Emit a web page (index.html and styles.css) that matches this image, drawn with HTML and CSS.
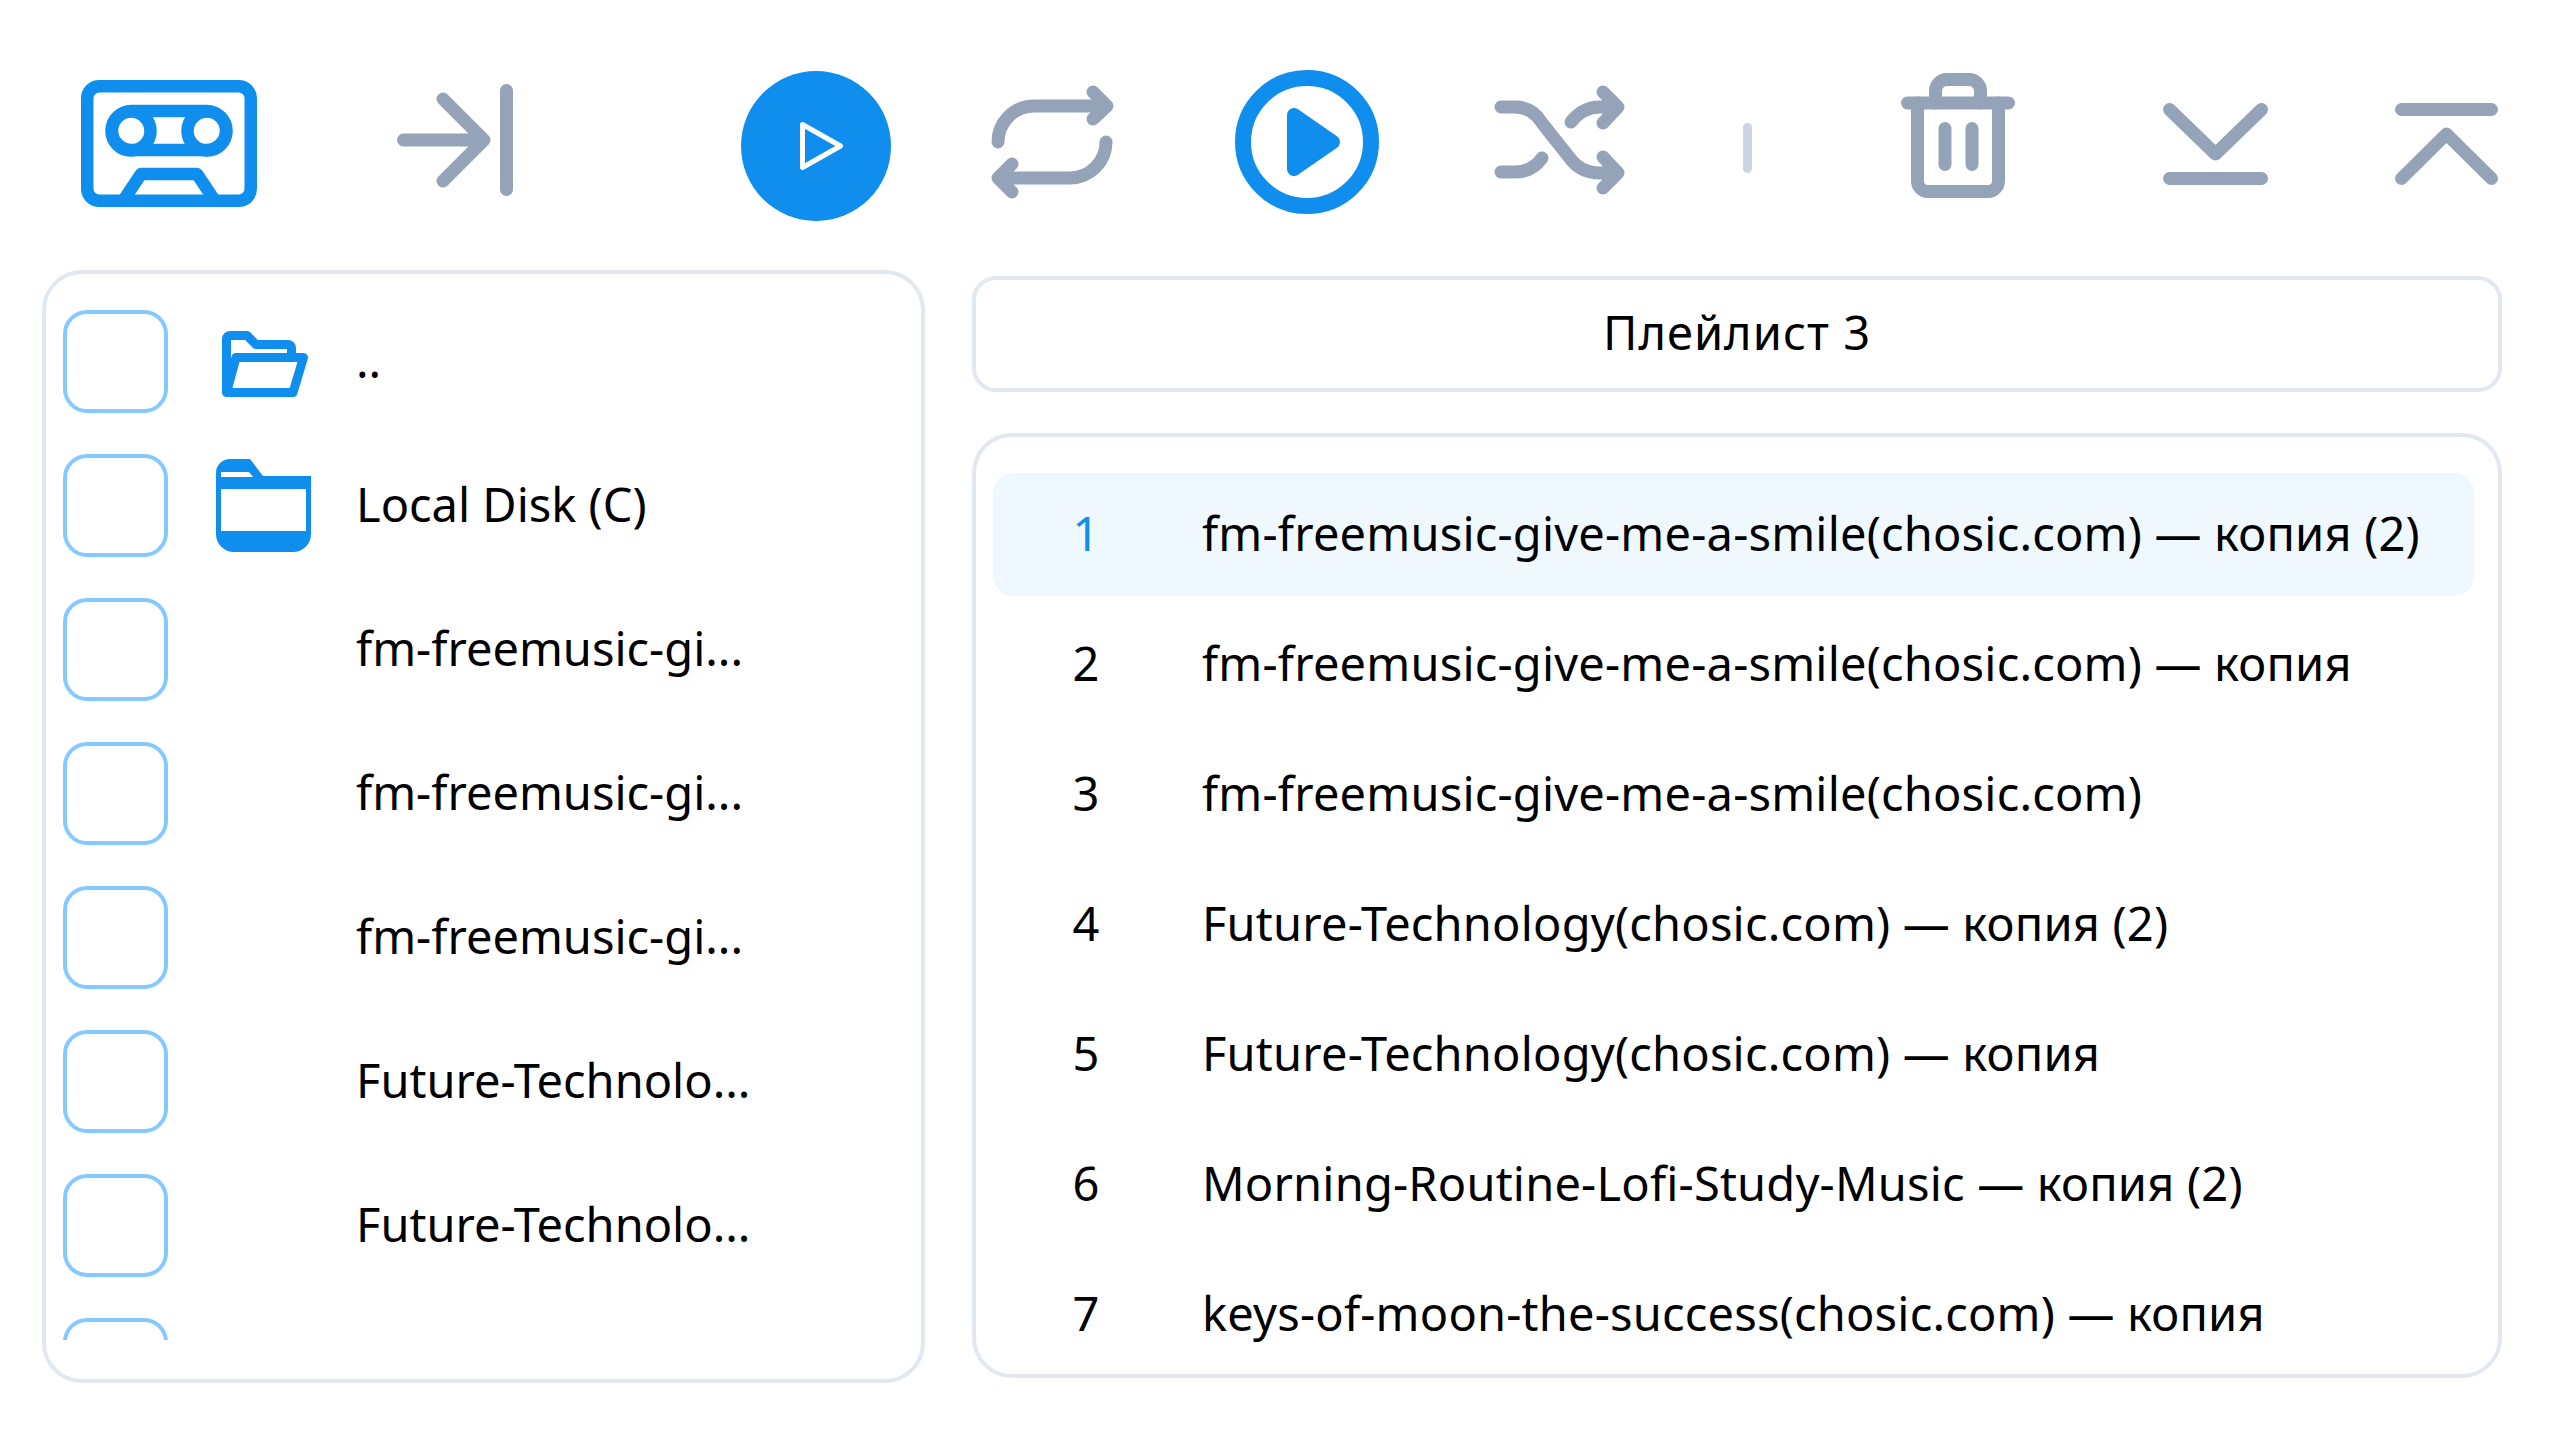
FILE: index.html
```html
<!DOCTYPE html>
<html lang="en">
<head>
    <meta charset="UTF-8">
    <meta name="viewport" content="width=device-width, initial-scale=1.0">
    <title>Player</title>
    <link rel="stylesheet" href="styles.css">
</head>
<body>

    <header class="toolbar">
        <svg class="icon icon-cassette" width="176" height="127" viewBox="0 0 176 127">
            <rect x="6.25" y="6.25" width="163.5" height="114.5" rx="12"/>
            <rect x="31" y="31" width="114" height="39" rx="19.5"/>
            <circle cx="50" cy="51" r="19.5"/>
            <circle cx="126" cy="51" r="19.5"/>
            <path d="M42 121 L60 94 H116 L134 121"/>
        </svg>
        <svg class="icon icon-skip" width="116" height="112" viewBox="0 0 116 112">
            <path d="M6.5 56 H85 M46 15 L87 56 L46 97 M109.5 6.5 V105.5"/>
        </svg>
        <svg class="icon-play" width="150" height="150" viewBox="0 0 150 150">
            <circle cx="75" cy="75" r="75"/>
            <path d="M61.5 53.5 L99.5 75 L61.5 96.5 Z"/>
        </svg>
        <svg class="icon icon-repeat" width="135" height="125" viewBox="0 0 135 125">
            <path d="M13 62 A36 36 0 0 1 49 26 H122 M108 12 L122 26 L108 39"/>
            <path d="M121 62 A36 36 0 0 1 85 98 H13 M27 84 L13 98 L27 112"/>
        </svg>
        <svg class="icon-autoplay" width="144" height="144" viewBox="0 0 144 144">
            <circle cx="72" cy="72" r="64"/>
            <path d="M59 45 L98 72 L59 99 Z"/>
        </svg>
        <svg class="icon icon-shuffle" width="140" height="118" viewBox="0 0 140 118">
            <path d="M11 27 H25 C38 27 46 33 52 43 L79 77 C86 87 96 93 110 93 H127 M113 77 L128 93 L113 108"/>
            <path d="M81 42 C88 33 98 27 110 27 H127 M113 12 L128 27 L113 43"/>
            <path d="M11 92 H25 C36 92 45 88 52 78"/>
        </svg>
        <div class="separator"></div>
        <svg class="icon icon-trash" width="114" height="125" viewBox="0 0 114 125">
            <path d="M6.5 30 H107.5"/>
            <path d="M16.5 30 V108 A10.5 10.5 0 0 0 27 118.5 H87 A10.5 10.5 0 0 0 97.5 108 V30"/>
            <path d="M34.5 30 V18 A11.5 11.5 0 0 1 46 6.5 H68 A11.5 11.5 0 0 1 79.5 18 V30"/>
            <path d="M44 55.5 V91.5 M71 55.5 V91.5"/>
        </svg>
        <svg class="icon icon-down" width="105" height="82" viewBox="0 0 105 82">
            <path d="M6.5 6.5 L52.5 51 L98.5 6.5 M6.5 75.5 H98.5"/>
        </svg>
        <svg class="icon icon-up" width="103" height="82" viewBox="0 0 103 82">
            <path d="M6.5 6.5 H96.5 M6.5 75.5 L51.5 31 L96.5 75.5"/>
        </svg>
    </header>

    <main class="content">
        <section class="files">
            <div class="file-list">
                <div class="file">
                    <div class="check"></div>
                    <div class="file-icon">
                        <svg class="folder-open" width="86" height="66" viewBox="0 0 86 66">
                            <path d="M4.5 61.5 V8 A3.5 3.5 0 0 1 8 4.5 H25 L34 13.5 H66 A3.5 3.5 0 0 1 69.5 17 V25"/>
                            <path d="M4.5 61.5 L14 26.5 H81.5 L71 61.5 Z"/>
                        </svg>
                    </div>
                    <span class="file-name">..</span>
                </div>
                <div class="file">
                    <div class="check"></div>
                    <div class="file-icon">
                        <svg class="folder" width="95" height="93" viewBox="0 0 95 93">
                            <path class="folder-fill" d="M0 14 A14 14 0 0 1 14 0 H34 L47 17 H95 V75 A18 18 0 0 1 77 93 H18 A18 18 0 0 1 0 75 Z"/>
                            <path class="folder-cut" d="M5 30 H90 V72 H5 Z M5 13 H33 L37 18 H5 Z"/>
                        </svg>
                    </div>
                    <span class="file-name">Local Disk (C)</span>
                </div>
                <div class="file">
                    <div class="check"></div>
                    <div class="file-icon"></div>
                    <span class="file-name">fm-freemusic-gi...</span>
                </div>
                <div class="file">
                    <div class="check"></div>
                    <div class="file-icon"></div>
                    <span class="file-name">fm-freemusic-gi...</span>
                </div>
                <div class="file">
                    <div class="check"></div>
                    <div class="file-icon"></div>
                    <span class="file-name">fm-freemusic-gi...</span>
                </div>
                <div class="file">
                    <div class="check"></div>
                    <div class="file-icon"></div>
                    <span class="file-name">Future-Technolo...</span>
                </div>
                <div class="file">
                    <div class="check"></div>
                    <div class="file-icon"></div>
                    <span class="file-name">Future-Technolo...</span>
                </div>
                <div class="file">
                    <div class="check"></div>
                    <div class="file-icon"></div>
                    <span class="file-name"></span>
                </div>
            </div>
        </section>

        <section class="side">
            <div class="playlist-title"><span>Плейлист 3</span></div>
            <div class="tracks">
                <div class="track active"><span class="track-num">1</span><span class="track-name">fm-freemusic-give-me-a-smile(chosic.com) — копия (2)</span></div>
                <div class="track"><span class="track-num">2</span><span class="track-name">fm-freemusic-give-me-a-smile(chosic.com) — копия</span></div>
                <div class="track"><span class="track-num">3</span><span class="track-name">fm-freemusic-give-me-a-smile(chosic.com)</span></div>
                <div class="track"><span class="track-num">4</span><span class="track-name">Future-Technology(chosic.com) — копия (2)</span></div>
                <div class="track"><span class="track-num">5</span><span class="track-name">Future-Technology(chosic.com) — копия</span></div>
                <div class="track"><span class="track-num">6</span><span class="track-name">Morning-Routine-Lofi-Study-Music — копия (2)</span></div>
                <div class="track"><span class="track-num">7</span><span class="track-name">keys-of-moon-the-success(chosic.com) — копия</span></div>
            </div>
        </section>
    </main>

</body>
</html>
```

FILE: styles.css
```css
body {
    font-family: "Noto Sans", "Open Sans", sans-serif;
    font-size: 47px;
    letter-spacing: 0.2px;
    line-height: 60px;
    color: #000;
    margin: 0;
    background-color: #fff;
}

.toolbar {
    display: flex;
    align-items: flex-start;
    height: 270px;
    box-sizing: border-box;
}

.icon {
    fill: none;
    stroke: #94a3b8;
    stroke-width: 13;
    stroke-linecap: round;
    stroke-linejoin: round;
    flex: none;
}

.icon-cassette {
    stroke: #108eee;
    stroke-width: 12.5;
    margin: 80px 0 0 81px;
}

.icon-skip {
    margin: 84px 0 0 140px;
}

.icon-play {
    flex: none;
    margin: 71px 0 0 228px;
}

.icon-play circle {
    fill: #108eee;
}

.icon-play path {
    fill: none;
    stroke: #fff;
    stroke-width: 5;
    stroke-linejoin: round;
}

.icon-repeat {
    margin: 80px 0 0 94px;
}

.icon-autoplay {
    flex: none;
    margin: 70px 0 0 115px;
}

.icon-autoplay circle {
    fill: none;
    stroke: #108eee;
    stroke-width: 16;
}

.icon-autoplay path {
    fill: #108eee;
    stroke: #108eee;
    stroke-width: 14;
    stroke-linejoin: round;
}

.icon-shuffle {
    margin: 80px 0 0 111px;
}

.separator {
    flex: none;
    width: 9px;
    height: 50px;
    margin: 123px 0 0 113px;
    border-radius: 5px;
    background-color: #cbd5e1;
}

.icon-trash {
    margin: 73px 0 0 149px;
}

.icon-down {
    margin: 103px 0 0 148px;
}

.icon-up {
    margin: 103px 0 0 127px;
}

.content {
    display: flex;
    align-items: flex-start;
    gap: 47px;
    padding-left: 42px;
}

.files {
    width: 883px;
    height: 1113px;
    box-sizing: border-box;
    padding: 36px 0 0 17px;
    border: 4px solid #e2e8f0;
    border-radius: 40px;
}

.file-list {
    height: 1030px;
    overflow: hidden;
}

.file {
    display: flex;
    align-items: center;
    height: 103px;
    margin-bottom: 41px;
}

.check {
    flex: none;
    width: 105px;
    height: 103px;
    box-sizing: border-box;
    border: 4px solid #85c9ff;
    border-radius: 24px;
}

.file-icon {
    flex: none;
    display: flex;
    justify-content: center;
    width: 130px;
    margin: 0 28px 0 30px;
}

.folder-open {
    margin: 4px 0 0 4px;
    fill: none;
    stroke: #108eee;
    stroke-width: 9;
    stroke-linejoin: round;
}

.folder-fill {
    fill: #108eee;
}

.folder-cut {
    fill: #fff;
}

.file-name {
    position: relative;
    top: -2px;
    letter-spacing: 0;
}

.side {
    width: 1530px;
    padding-top: 6px;
}

.playlist-title {
    height: 116px;
    box-sizing: border-box;
    border: 4px solid #e2e8f0;
    border-radius: 24px;
    display: flex;
    align-items: center;
    justify-content: center;
    margin-bottom: 41px;
    letter-spacing: 1px;
}

.playlist-title span {
    position: relative;
    top: -2px;
}

.tracks {
    height: 945px;
    box-sizing: border-box;
    padding: 36px 24px 0 17px;
    border: 4px solid #e2e8f0;
    border-radius: 40px;
    overflow: hidden;
}

.track {
    display: grid;
    grid-template-columns: 186px 1fr;
    column-gap: 23px;
    align-items: center;
    height: 123px;
    margin-bottom: 7px;
    border-radius: 20px;
    white-space: nowrap;
}

.track-num,
.track-name {
    position: relative;
    top: -2px;
}

.track-num {
    text-align: center;
}

.track.active {
    background-color: #f0f8ff;
}

.track.active .track-num {
    color: #108eee;
}
```
